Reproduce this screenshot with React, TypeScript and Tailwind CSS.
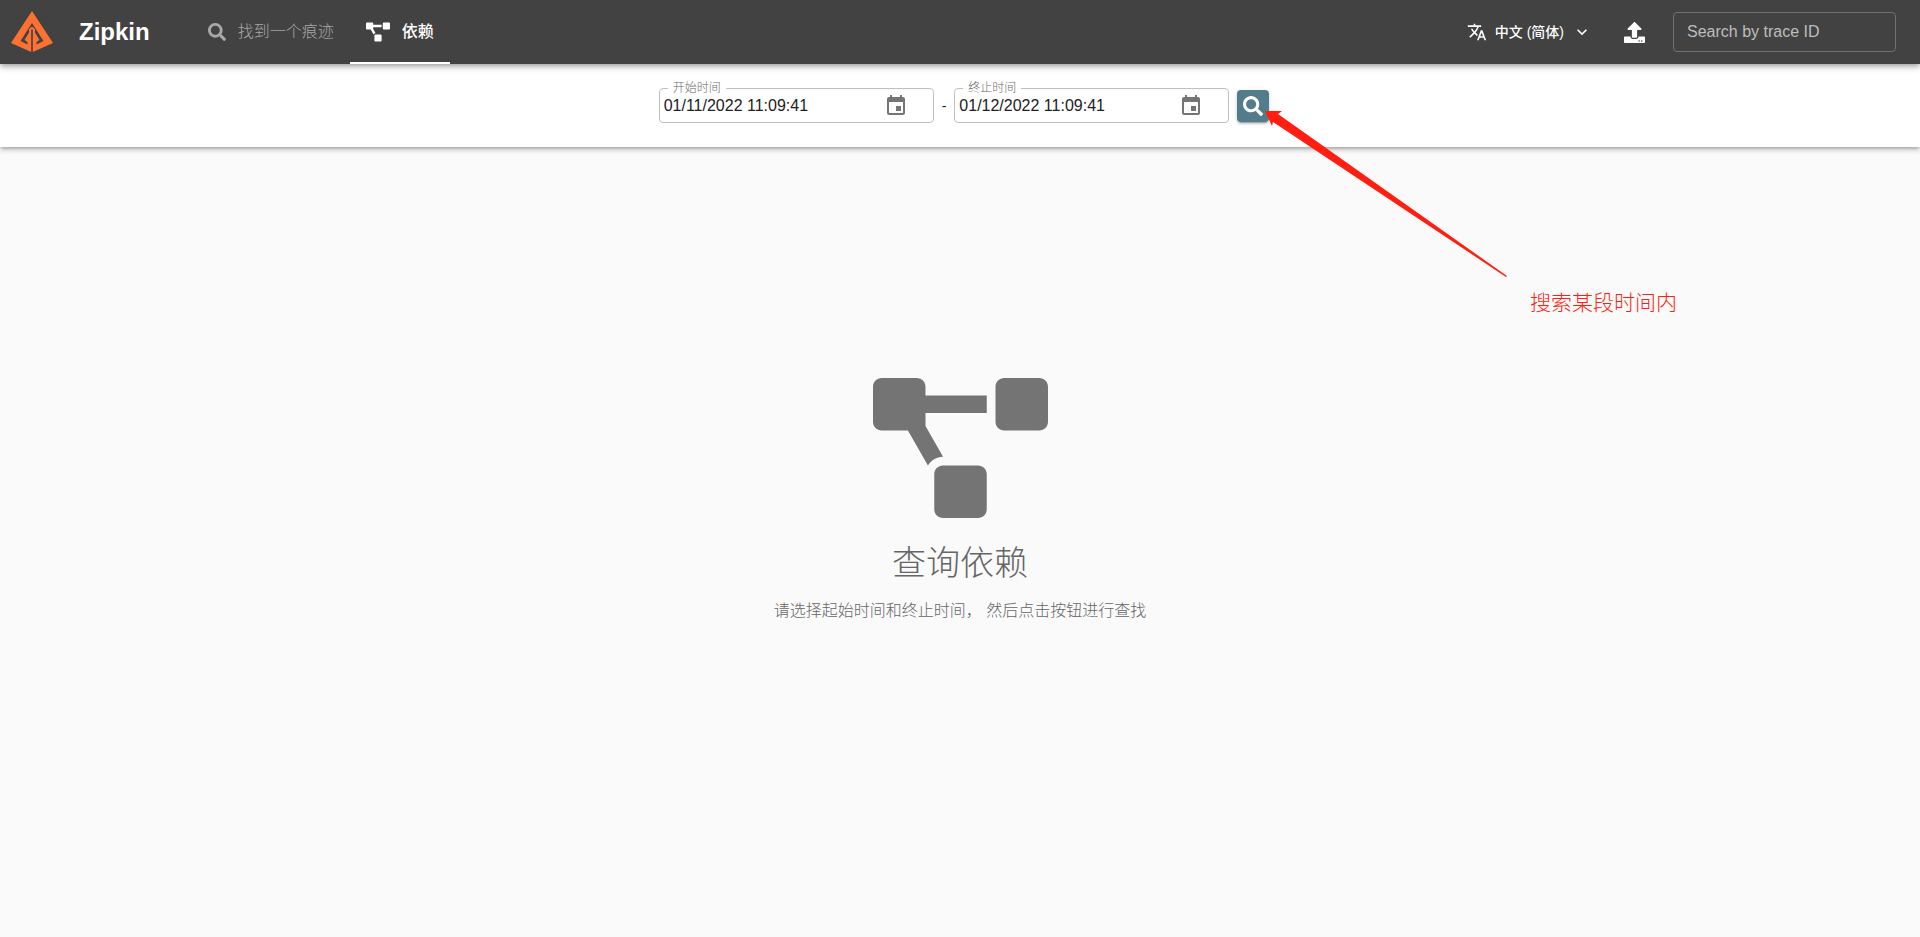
import { useState } from 'react';
import { FaProjectDiagram, FaSearch, FaUpload } from 'react-icons/fa';
import { MdEvent, MdKeyboardArrowDown, MdTranslate } from 'react-icons/md';

function Logo() {
  return (
    <svg viewBox="0 0 42 42" className="w-[42px] h-[42px]" fill="#ff7132" aria-hidden="true">
      <path
        fillRule="evenodd"
        d="M21 0 L42 32 L21.8 41 V18.5 L20.2 18.5 V41 L0 32 Z M21 12 L9.5 30 L16.5 33.5 V31 L13.5 29 L18 21.5 V18 L21 15.5 L24 18 V21.5 L28.5 29 L25.5 31 V33.5 L32.5 30 Z"
      />
    </svg>
  );
}

type DateFieldProps = {
  id: string;
  label: string;
  initial: string;
};

function DateField({ id, label, initial }: DateFieldProps) {
  const [value, setValue] = useState(initial);

  return (
    <div className="relative flex items-center w-[275px] h-[35px] border border-[#c0c0c0] rounded">
      <label htmlFor={id} className="absolute left-2 -top-[9px] px-[5px] bg-white text-xs leading-4 font-light text-[#6b6b6b]">
        {label}
      </label>
      <input
        id={id}
        type="text"
        value={value}
        onChange={(e) => setValue(e.target.value)}
        className="flex-1 min-w-0 pl-1 bg-transparent text-base leading-5 text-[#212121] outline-none"
      />
      <button type="button" aria-label={label} className="mr-[25px] text-[#757575]">
        <MdEvent className="w-6 h-6" />
      </button>
    </div>
  );
}

export default function App() {
  const [traceId, setTraceId] = useState('');

  return (
    <div className="relative min-h-screen overflow-hidden bg-[#fafafa] font-['Liberation_Sans','Noto_Sans_CJK_SC',sans-serif]">
      <header className="relative z-20 flex items-center justify-between h-16 pl-[11px] pr-6 bg-[#424242] text-white shadow-[0px_2px_4px_-1px_rgba(0,0,0,0.2),0px_4px_5px_0px_rgba(0,0,0,0.14),0px_1px_10px_0px_rgba(0,0,0,0.12)]">
        <div className="flex items-center h-full">
          <Logo />
          <h1 className="ml-[26px] text-2xl font-bold">Zipkin</h1>
          <nav className="flex h-full ml-[42px]">
            <a href="#find" className="flex items-center gap-3 px-4 text-base font-light text-[#a8a8a8]">
              <FaSearch className="w-[18px] h-[18px]" />
              找到一个痕迹
            </a>
            <a
              href="#dependency"
              className="flex items-center gap-3 px-4 text-base font-medium shadow-[inset_0_-2px_0_#fff]"
            >
              <FaProjectDiagram className="w-6 h-5" />
              依赖
            </a>
          </nav>
        </div>
        <div className="flex items-center">
          <button type="button" className="flex items-center gap-2 text-sm font-medium">
            <MdTranslate className="w-5 h-5" />
            中文 (简体)
            <MdKeyboardArrowDown className="w-5 h-5" />
          </button>
          <button type="button" aria-label="Upload" className="ml-8">
            <FaUpload className="w-[21px] h-[21px]" />
          </button>
          <input
            type="text"
            aria-label="Search by trace ID"
            placeholder="Search by trace ID"
            value={traceId}
            onChange={(e) => setTraceId(e.target.value)}
            className="ml-7 w-[223px] h-10 px-[13px] border border-[#707070] rounded bg-transparent text-base placeholder:text-[#bdbdbd] outline-none"
          />
        </div>
      </header>

      <div className="relative z-10 flex justify-center h-[83px] pt-6 pl-2 bg-white shadow-[0px_3px_3px_-2px_rgba(0,0,0,0.2),0px_3px_4px_0px_rgba(0,0,0,0.14),0px_1px_8px_0px_rgba(0,0,0,0.12)]">
        <form className="flex items-center gap-2 h-[35px]" onSubmit={(e) => e.preventDefault()}>
          <DateField id="start-time" label="开始时间" initial="01/11/2022 11:09:41" />
          <span className="text-sm text-[#212121]">-</span>
          <DateField id="end-time" label="终止时间" initial="01/12/2022 11:09:41" />
          <button
            type="submit"
            aria-label="Search"
            className="flex items-center justify-center w-8 h-8 rounded bg-[#527c8c] text-white shadow-[0px_3px_1px_-2px_rgba(0,0,0,0.2),0px_2px_2px_0px_rgba(0,0,0,0.14),0px_1px_5px_0px_rgba(0,0,0,0.12)]"
          >
            <FaSearch className="w-5 h-5" />
          </button>
        </form>
      </div>

      <main className="flex flex-col items-center pt-[231px] text-[#747474]">
        <FaProjectDiagram className="w-[175px] h-[140px]" />
        <h2 className="mt-[21px] text-[34px] leading-[48px] font-light text-[#666666]">查询依赖</h2>
        <p className="mt-3 text-base leading-6 font-light text-[#666666]">
          请选择起始时间和终止时间， 然后点击按钮进行查找
        </p>
      </main>

      <div className="absolute z-30 top-[111px] left-[1265px] text-[#ff1e10] pointer-events-none">
        <svg viewBox="0 0 242 166" className="w-[242px] h-[166px]" fill="currentColor" aria-hidden="true">
          <path d="M0 0 L17 0 L13 3 L242 165 L241 166 L8 11 L7 15 Z" />
        </svg>
        <p className="mt-[10px] ml-[265px] text-[21px] leading-8 font-light whitespace-nowrap">搜索某段时间内</p>
      </div>
    </div>
  );
}
